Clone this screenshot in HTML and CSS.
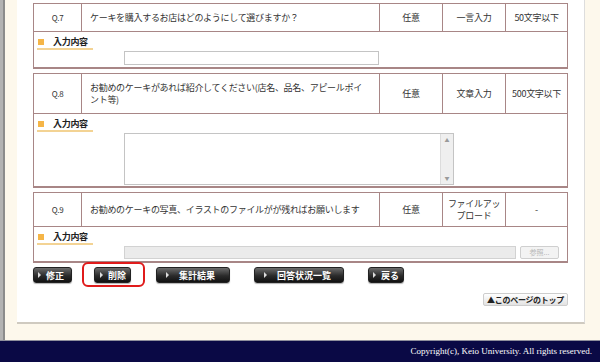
FILE: index.html
```html
<!DOCTYPE html>
<html lang="ja">
<head>
    <meta charset="UTF-8">
    <meta name="viewport" content="width=device-width, initial-scale=1.0">
    <title>アンケート回答内容</title>
    <link rel="stylesheet" href="styles.css">
</head>
<body>
    <div class="page">
        <div class="panel">
            <div class="qbox">
                <div class="qhead">
                    <div class="cell num">Q.7</div>
                    <div class="cell text">ケーキを購入するお店はどのようにして選びますか？</div>
                    <div class="cell">任意</div>
                    <div class="cell">一言入力</div>
                    <div class="cell">50文字以下</div>
                </div>
                <div class="qans">
                    <div class="label"><span class="mark"></span>入力内容</div>
                    <input type="text" class="field">
                </div>
            </div>

            <div class="qbox">
                <div class="qhead tall">
                    <div class="cell num">Q.8</div>
                    <div class="cell text wrap">お勧めのケーキがあれば紹介してください(店名、品名、アピールポイント等)</div>
                    <div class="cell">任意</div>
                    <div class="cell">文章入力</div>
                    <div class="cell">500文字以下</div>
                </div>
                <div class="qans">
                    <div class="label"><span class="mark"></span>入力内容</div>
                    <div class="areabox">
                        <textarea class="area"></textarea>
                        <div class="vscroll"><span>▲</span><span>▼</span></div>
                    </div>
                </div>
            </div>

            <div class="qbox">
                <div class="qhead mid">
                    <div class="cell num">Q.9</div>
                    <div class="cell text">お勧めのケーキの写真、イラストのファイルがが残ればお願いします</div>
                    <div class="cell">任意</div>
                    <div class="cell">ファイルアッ<br>プロード</div>
                    <div class="cell">-</div>
                </div>
                <div class="qans">
                    <div class="label"><span class="mark"></span>入力内容</div>
                    <div class="filerow">
                        <div class="filebox"></div>
                        <div class="filebtn">参照...</div>
                    </div>
                </div>
            </div>

            <div class="actions">
                <a class="btn w-edit" href="#">修正</a>
                <span class="marked"><a class="btn w-del" href="#">削除</a></span>
                <a class="btn w-sum" href="#">集計結果</a>
                <a class="btn w-list" href="#">回答状況一覧</a>
                <a class="btn w-back" href="#">戻る</a>
            </div>

            <div class="totop">
                <a class="topbtn" href="#">▲このページのトップ</a>
            </div>
        </div>
    </div>
    <div class="footer">Copyright(c), Keio University. All rights reserved.</div>
</body>
</html>
```

FILE: styles.css
```css
body {
    margin: 0;
    background-color: #fdf8ec;
    font-family: "Noto Sans CJK JP", sans-serif;
    color: #333;
}
.page {
    border-left: 3px solid #b3b3b3;
    box-shadow: inset 2px 0 0 #8c8c8c;
    padding: 0 15px 16px 14px;
}
.panel {
    background: #fff;
    border-right: 1px solid #ddd;
    border-bottom: 2px solid #cfcac0;
    padding: 3px 16px 16px 16px;
}
.qbox {
    border: 1px solid #a88686;
    border-bottom-width: 2px;
    margin-bottom: 4px;
}
.qhead {
    display: grid;
    grid-template-columns: 47px 298px 63px 63px 1fr;
    height: 27px;
    border-bottom: 1px solid #a88686;
}
.qhead.tall {
    height: 39px;
}
.qhead.mid {
    height: 33px;
}
.cell {
    display: flex;
    align-items: center;
    justify-content: center;
    text-align: center;
    font-size: 9px;
    line-height: 12px;
    letter-spacing: -0.3px;
    border-left: 1px solid #a88686;
}
.cell.num {
    border-left: none;
    font-size: 8px;
}
.cell.text {
    justify-content: flex-start;
    text-align: left;
    padding: 0 6px 0 8px;
}
.cell.wrap {
    padding-right: 10px;
}
.qans {
    padding: 3px 0 2px 3px;
}
.label {
    display: flex;
    align-items: center;
    width: 56px;
    height: 13px;
    border-bottom: 2px solid #f3d394;
    font-size: 9px;
    font-weight: bold;
    letter-spacing: -0.3px;
    color: #222;
}
.mark {
    width: 6px;
    height: 6px;
    background: #f5b547;
    margin: 0 9px 0 1px;
}
.field {
    display: block;
    box-sizing: border-box;
    width: 255px;
    height: 14px;
    margin: 1px 0 0 87px;
    border: 1px solid #c4c4c4;
    padding: 0;
}
.areabox {
    display: flex;
    box-sizing: border-box;
    width: 330px;
    height: 52px;
    margin: 1px 0 -1px 87px;
    border: 1px solid #c4c4c4;
}
.area {
    flex: 1;
    border: none;
    resize: none;
    padding: 0;
    outline: none;
}
.vscroll {
    display: flex;
    flex-direction: column;
    justify-content: space-between;
    align-items: center;
    width: 12px;
    padding: 3px 0;
    background: #efefef;
    border-left: 1px solid #dcdcdc;
    font-size: 5px;
    line-height: 6px;
    color: #9a9a9a;
}
.filerow {
    display: flex;
    align-items: center;
    gap: 4px;
    margin: 1px 0 0 87px;
}
.filebox {
    width: 390px;
    height: 11px;
    background: #ebebeb;
    border: 1px solid #d2d2d2;
}
.filebtn {
    width: 37px;
    height: 11px;
    font-size: 7px;
    line-height: 11px;
    text-align: center;
    color: #b8b8b8;
    background: #f3f3f3;
    border: 1px solid #cfcfcf;
    border-radius: 2px;
}
.actions {
    display: flex;
    align-items: center;
    height: 16px;
}
.btn {
    display: flex;
    align-items: center;
    box-sizing: border-box;
    height: 16px;
    padding-left: 4px;
    font-size: 9px;
    font-weight: bold;
    color: #fff;
    text-decoration: none;
    background: linear-gradient(#6c6c6c, #2b2b2b 55%, #111);
    border: 1px solid #222;
    border-radius: 3px;
    box-shadow: 0 1px 1px rgba(0, 0, 0, 0.3);
}
.btn::before {
    content: "";
    border-left: 3px solid #ddd;
    border-top: 3px solid transparent;
    border-bottom: 3px solid transparent;
    margin-right: 5px;
}
.w-edit { width: 39px; margin-right: 22px; }
.w-del { width: 37px; padding-left: 5px; }
.w-sum { width: 74px; margin-right: 24px; padding-left: 9px; }
.w-sum::before, .w-list::before { margin-right: 10px; }
.w-list { width: 90px; margin-right: 24px; padding-left: 9px; }
.w-back { width: 36px; }
.marked {
    position: relative;
    margin-right: 25px;
}
.marked::after {
    content: "";
    position: absolute;
    left: -12px;
    top: -5px;
    width: 59px;
    height: 21px;
    border: 2px solid #e01b1b;
    border-radius: 6px;
}
.totop {
    display: flex;
    justify-content: flex-end;
    margin-top: 10px;
}
.topbtn {
    display: block;
    box-sizing: border-box;
    width: 85px;
    height: 13px;
    font-size: 8px;
    line-height: 11px;
    font-weight: bold;
    text-align: center;
    color: #222;
    letter-spacing: -0.3px;
    text-decoration: none;
    background: linear-gradient(#fff, #e2e2e2);
    border: 1px solid #cdcdcd;
    border-radius: 2px;
}
.footer {
    height: 21px;
    border-top: 1px solid #8f8f9c;
    background: #0a0945;
    color: #fff;
    font-family: "Liberation Serif", serif;
    font-size: 9px;
    line-height: 21px;
    text-align: right;
    padding-right: 8px;
}
```
